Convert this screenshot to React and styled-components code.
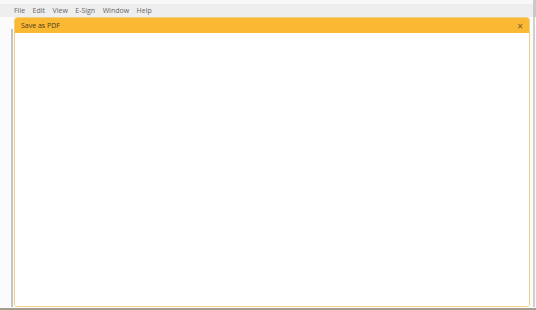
import React from "react";
import styled, { createGlobalStyle } from "styled-components";

const Global = createGlobalStyle`
  html, body { margin: 0; padding: 0; }
  body {
    background: #ffffff;
    font-family: "Open Sans", "Liberation Sans", sans-serif;
  }
`;

const menus = ["File", "Edit", "View", "E-Sign", "Window", "Help"];

const App = () => (
  <>
    <Global />
    <Screen>
      <MenuBar>
        {menus.map((m) => (
          <MenuItem key={m}>{m}</MenuItem>
        ))}
      </MenuBar>
      <Workspace>
        <EdgeLeft />
        <Dialog>
          <Header>
            <Title>Save as PDF</Title>
            <Close>×</Close>
          </Header>
          <Content />
        </Dialog>
        <EdgeRight />
      </Workspace>
    </Screen>
  </>
);

export default App;

const Screen = styled.div`
  width: 536px;
  height: 310px;
  display: flex;
  flex-direction: column;
  background: #fbfbfb;
  overflow: hidden;
`;

const MenuBar = styled.div`
  height: 17px;
  box-sizing: border-box;
  padding: 4px 0 0 14px;
  display: flex;
  align-items: center;
  gap: 7.5px;
  background: linear-gradient(to bottom, #f8f8f8 0, #f8f8f8 4px, #eeeeee 4px);
  border-right: 3px solid #c9c9c9;
`;

const MenuItem = styled.span`
  font-size: 7px;
  color: #666;
`;

const Workspace = styled.div`
  flex: 1;
  display: flex;
  padding-bottom: 1px;
  border-bottom: 2px solid #a49d8e;
`;

const EdgeLeft = styled.div`
  width: 2px;
  margin: 12px 1px 0 11px;
  background: #c4c4c4;
`;

const EdgeRight = styled.div`
  width: 2px;
  margin-left: 3px;
  background: #cfcfcf;
`;

const Dialog = styled.div`
  width: 514px;
  display: flex;
  flex-direction: column;
  border: 1px solid #f2cf86;
  border-radius: 3px;
  background: #ffffff;
  overflow: hidden;
`;

const Header = styled.div`
  height: 15px;
  display: flex;
  align-items: center;
  justify-content: space-between;
  padding: 0 6px;
  background: #fbb832;
`;

const Title = styled.span`
  font-size: 7px;
  color: #4a3a1a;
`;

const Close = styled.span`
  font-size: 10px;
  color: #6b5a3a;
  line-height: 1;
`;

const Content = styled.div`
  flex: 1;
  background: #ffffff;
`;
